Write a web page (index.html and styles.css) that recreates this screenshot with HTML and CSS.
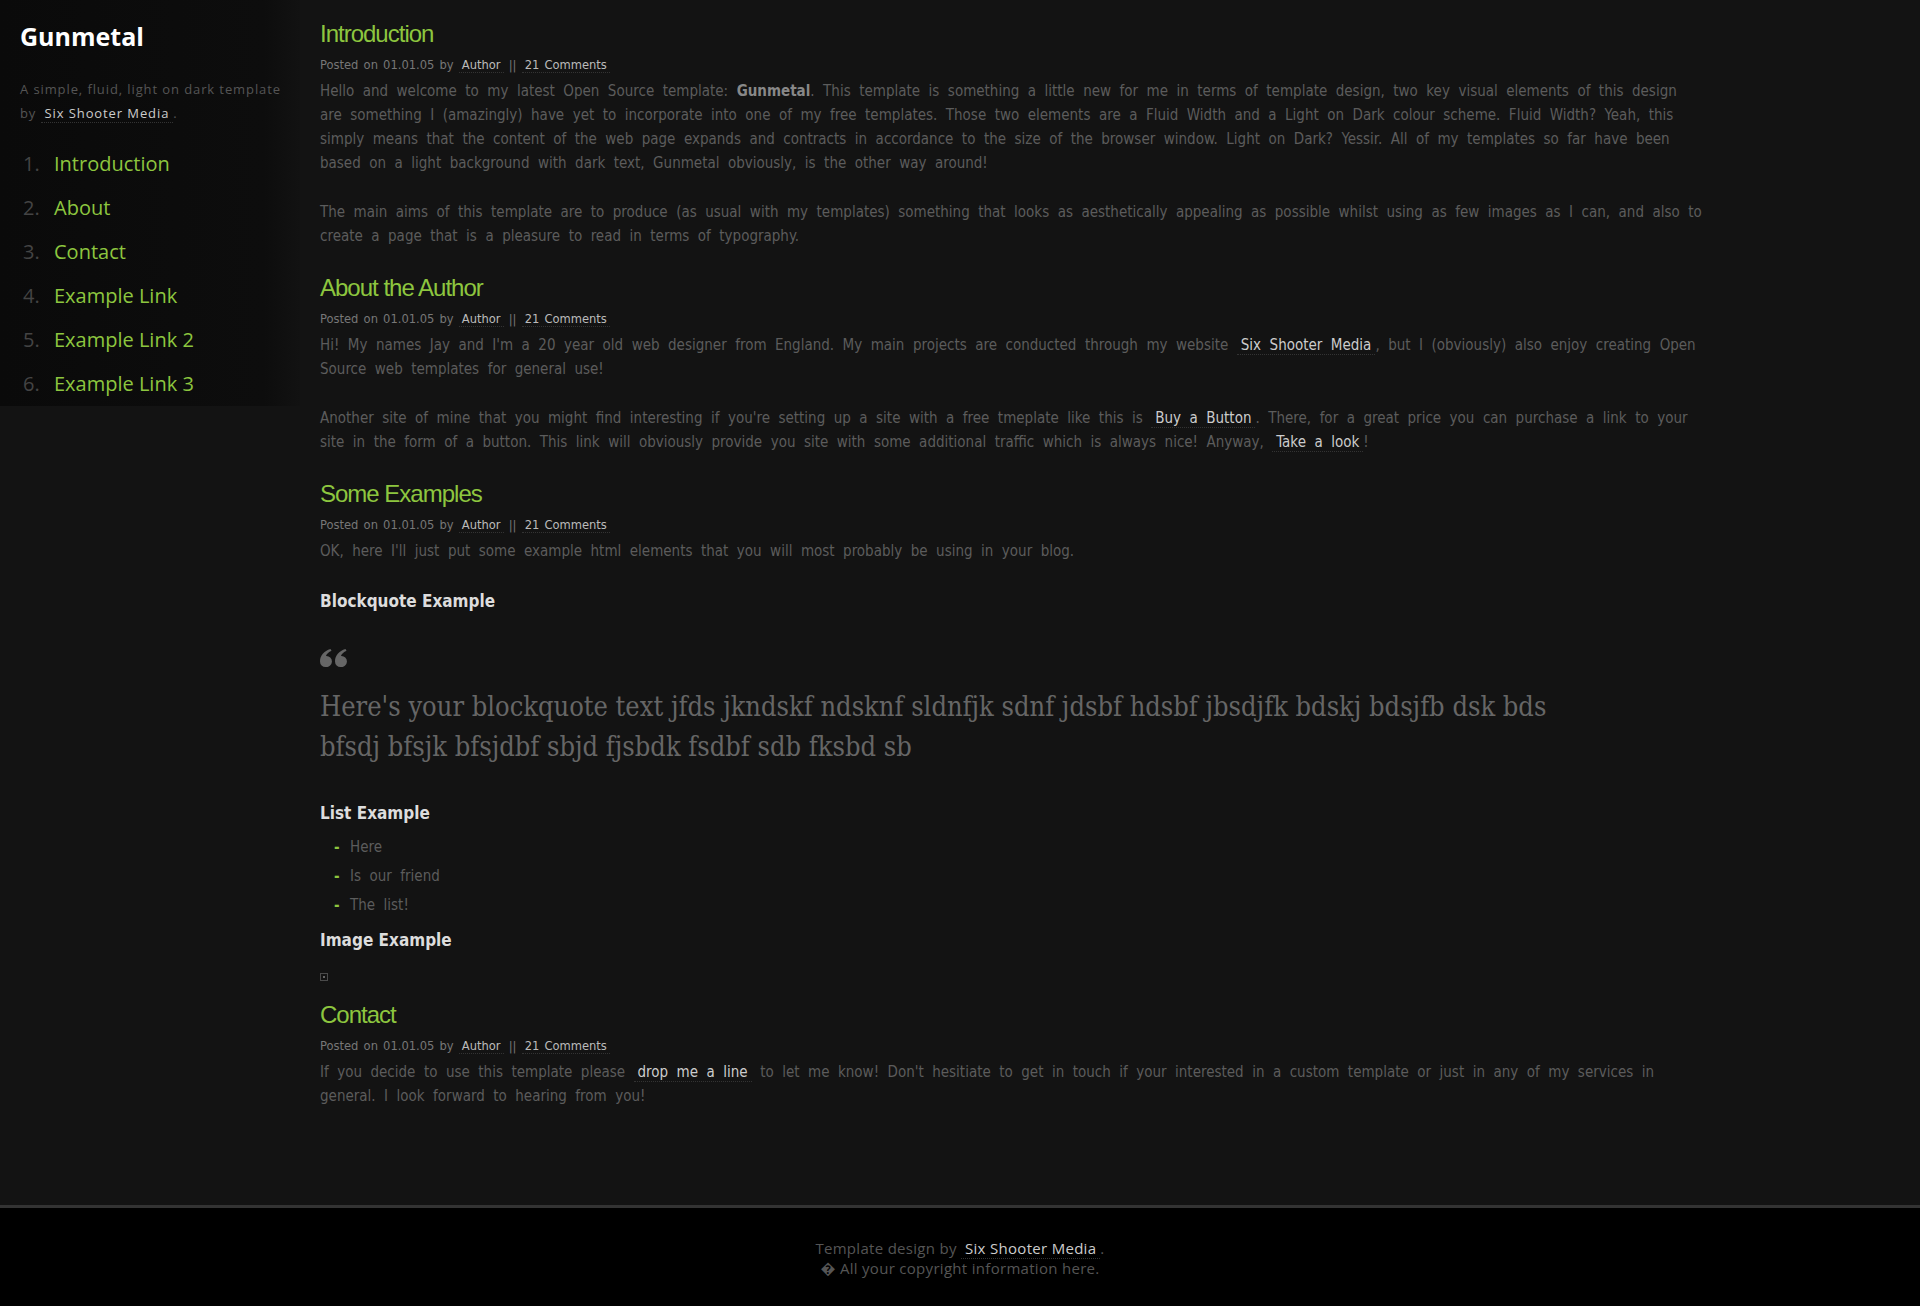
FILE: index.html
```html
<!DOCTYPE html>
<html lang="en">

<head>
    <meta charset="UTF-8">
    <meta name="viewport" content="width=device-width, initial-scale=1.0">
    <title>Gunmetal</title>
    <link rel="stylesheet" href="styles.css">
</head>

<body>

    <div class="page">
        <div class="sidebar">
            <h1>Gunmetal</h1>
            <p class="tagline">A simple, fluid, light on dark template by <a href="#">Six Shooter Media</a>.</p>

            <ol class="nav">
                <li><a href="#">Introduction</a></li>
                <li><a href="#">About</a></li>
                <li><a href="#">Contact</a></li>
                <li><a href="#">Example Link</a></li>
                <li><a href="#">Example Link 2</a></li>
                <li><a href="#">Example Link 3</a></li>
            </ol>
        </div>

        <div class="main">
            <h2>Introduction</h2>
            <div class="meta">Posted on 01.01.05 by <a href="#">Author</a> || <a href="#">21 Comments</a></div>
            <p>Hello and welcome to my latest Open Source template: <strong>Gunmetal</strong>. This template is something a little new for me in terms of template design, two key visual elements of this design are something I (amazingly) have yet to incorporate into one of my free templates. Those two elements are a Fluid Width and a Light on Dark colour scheme. Fluid Width? Yeah, this simply means that the content of the web page expands and contracts in accordance to the size of the browser window. Light on Dark? Yessir. All of my templates so far have been based on a light background with dark text, Gunmetal obviously, is the other way around!</p>
            <p>The main aims of this template are to produce (as usual with my templates) something that looks as aesthetically appealing as possible whilst using as few images as I can, and also to create a page that is a pleasure to read in terms of typography.</p>

            <h2>About the Author</h2>
            <div class="meta">Posted on 01.01.05 by <a href="#">Author</a> || <a href="#">21 Comments</a></div>
            <p>Hi! My names Jay and I'm a 20 year old web designer from England. My main projects are conducted through my website <a href="#">Six Shooter Media</a>, but I (obviously) also enjoy creating Open Source web templates for general use!</p>
            <p>Another site of mine that you might find interesting if you're setting up a site with a free tmeplate like this is <a href="#">Buy a Button</a>. There, for a great price you can purchase a link to your site in the form of a button. This link will obviously provide you site with some additional traffic which is always nice! Anyway, <a href="#">Take a look</a>!</p>

            <h2>Some Examples</h2>
            <div class="meta">Posted on 01.01.05 by <a href="#">Author</a> || <a href="#">21 Comments</a></div>
            <p>OK, here I'll just put some example html elements that you will most probably be using in your blog.</p>

            <h3>Blockquote Example</h3>
            <blockquote>
                <svg class="quote-mark" width="27" height="18" viewBox="0 0 27 18">
                    <path d="M5.5 18A5.5 5.5 0 0 1 0 12.5C0 6.5 4 2 10.5 0L11.5 1.8C8 3.6 6.3 5.5 6 7.1A5.5 5.5 0 1 1 5.5 18Z" />
                    <path d="M20.5 18A5.5 5.5 0 0 1 15 12.5C15 6.5 19 2 25.5 0L26.5 1.8C23 3.6 21.3 5.5 21 7.1A5.5 5.5 0 1 1 20.5 18Z" />
                </svg>
                <p>Here's your blockquote text jfds jkndskf ndsknf sldnfjk sdnf jdsbf hdsbf jbsdjfk bdskj bdsjfb dsk bds bfsdj bfsjk bfsjdbf sbjd fjsbdk fsdbf sdb fksbd sb</p>
            </blockquote>

            <h3>List Example</h3>
            <ul class="dash-list">
                <li>Here</li>
                <li>Is our friend</li>
                <li>The list!</li>
            </ul>

            <h3>Image Example</h3>
            <div class="broken-img"><span></span></div>

            <h2>Contact</h2>
            <div class="meta">Posted on 01.01.05 by <a href="#">Author</a> || <a href="#">21 Comments</a></div>
            <p>If you decide to use this template please <a href="#">drop me a line</a> to let me know! Don't hesitiate to get in touch if your interested in a custom template or just in any of my services in general. I look forward to hearing from you!</p>
        </div>
    </div>

    <div class="footer">
        Template design by <a href="#">Six Shooter Media</a>.<br>
        &#xFFFD; All your copyright information here.
    </div>

</body>

</html>
```

FILE: styles.css
```css
/* Base */
body {
    margin: 0;
    background-color: #131313;
    color: #5c5c5c;
    font-family: "Open Sans", "DejaVu Sans", sans-serif;
}

a {
    color: #ccc;
    text-decoration: none;
    padding: 0 4px;
    border-bottom: 1px dotted #333;
}

.page {
    display: flex;
    align-items: flex-start;
}

/* Left column */
.sidebar {
    width: 300px;
    flex-shrink: 0;
    box-sizing: border-box;
    padding: 21px 10px 0 20px;
    background: linear-gradient(to right, #0a0a0a, #0d0d0d 88%, #121212);
}

.sidebar h1 {
    margin: 0;
    font-size: 25px;
    line-height: 30px;
    font-weight: 700;
    color: #fff;
}

.tagline {
    margin: 26px 0 0;
    font-size: 13px;
    line-height: 24px;
    letter-spacing: 0.9px;
    color: #555;
}

.nav {
    list-style: none;
    margin: 17px 0 0;
    padding: 0;
    counter-reset: nav;
}

.nav li {
    counter-increment: nav;
    display: flex;
    font-size: 20px;
    line-height: 44px;
}

.nav li::before {
    content: counter(nav) ".";
    width: 31px;
    padding-left: 3px;
    color: #444;
}

.nav a {
    padding: 0;
    border: none;
    color: #8dc63f;
}

/* Content */
.main {
    flex: 1;
    padding: 19px 215px 72px 20px;
    font-family: "DejaVu Sans", "Open Sans", sans-serif;
    font-stretch: condensed;
}

.main h2 {
    margin: 0;
    font-family: "Liberation Sans", Arial, sans-serif;
    font-stretch: normal;
    font-size: 24px;
    line-height: 30px;
    font-weight: normal;
    letter-spacing: -1px;
    color: #8dc63f;
}

.meta {
    margin: 6px 0 4px;
    font-size: 12.8px;
    line-height: 20px;
    word-spacing: 1.5px;
    color: #777;
}

.meta a {
    padding: 0 3px;
    color: #bbb;
}

.main p {
    margin: 0 0 25px;
    font-size: 15px;
    line-height: 24px;
    word-spacing: 4.2px;
}

.main strong {
    color: #888;
}

.main h3 {
    margin: 0;
    font-size: 17px;
    line-height: 26px;
    font-weight: 700;
    color: #ddd;
}

blockquote {
    margin: 35px 0 33px;
    max-width: 1260px;
}

.quote-mark {
    display: block;
    fill: #666;
    margin-bottom: 20px;
}

.main blockquote p {
    margin: 0;
    font-family: "DejaVu Serif", serif;
    font-size: 27px;
    line-height: 40px;
    word-spacing: 0;
    color: #666;
}

.dash-list {
    list-style: none;
    margin: 7px 0 7px;
    padding: 0;
}

.dash-list li {
    display: flex;
    padding-left: 14px;
    font-size: 15px;
    line-height: 29px;
    word-spacing: 4.2px;
}

.dash-list li::before {
    content: "-";
    width: 16px;
    font-weight: 700;
    color: #8dc63f;
}

.broken-img {
    width: 6px;
    height: 6px;
    margin: 20px 0 19px;
    border: 1px solid #4a4a4a;
    display: flex;
    align-items: center;
    justify-content: center;
}

.broken-img span {
    width: 2px;
    height: 2px;
    background-color: #666;
}

/* Bottom bar */
.footer {
    border-top: 3px solid #333;
    background-color: #000;
    padding: 30px 0 29px;
    text-align: center;
    font-size: 15px;
    line-height: 20px;
    letter-spacing: 0.3px;
    color: #555;
}
```
